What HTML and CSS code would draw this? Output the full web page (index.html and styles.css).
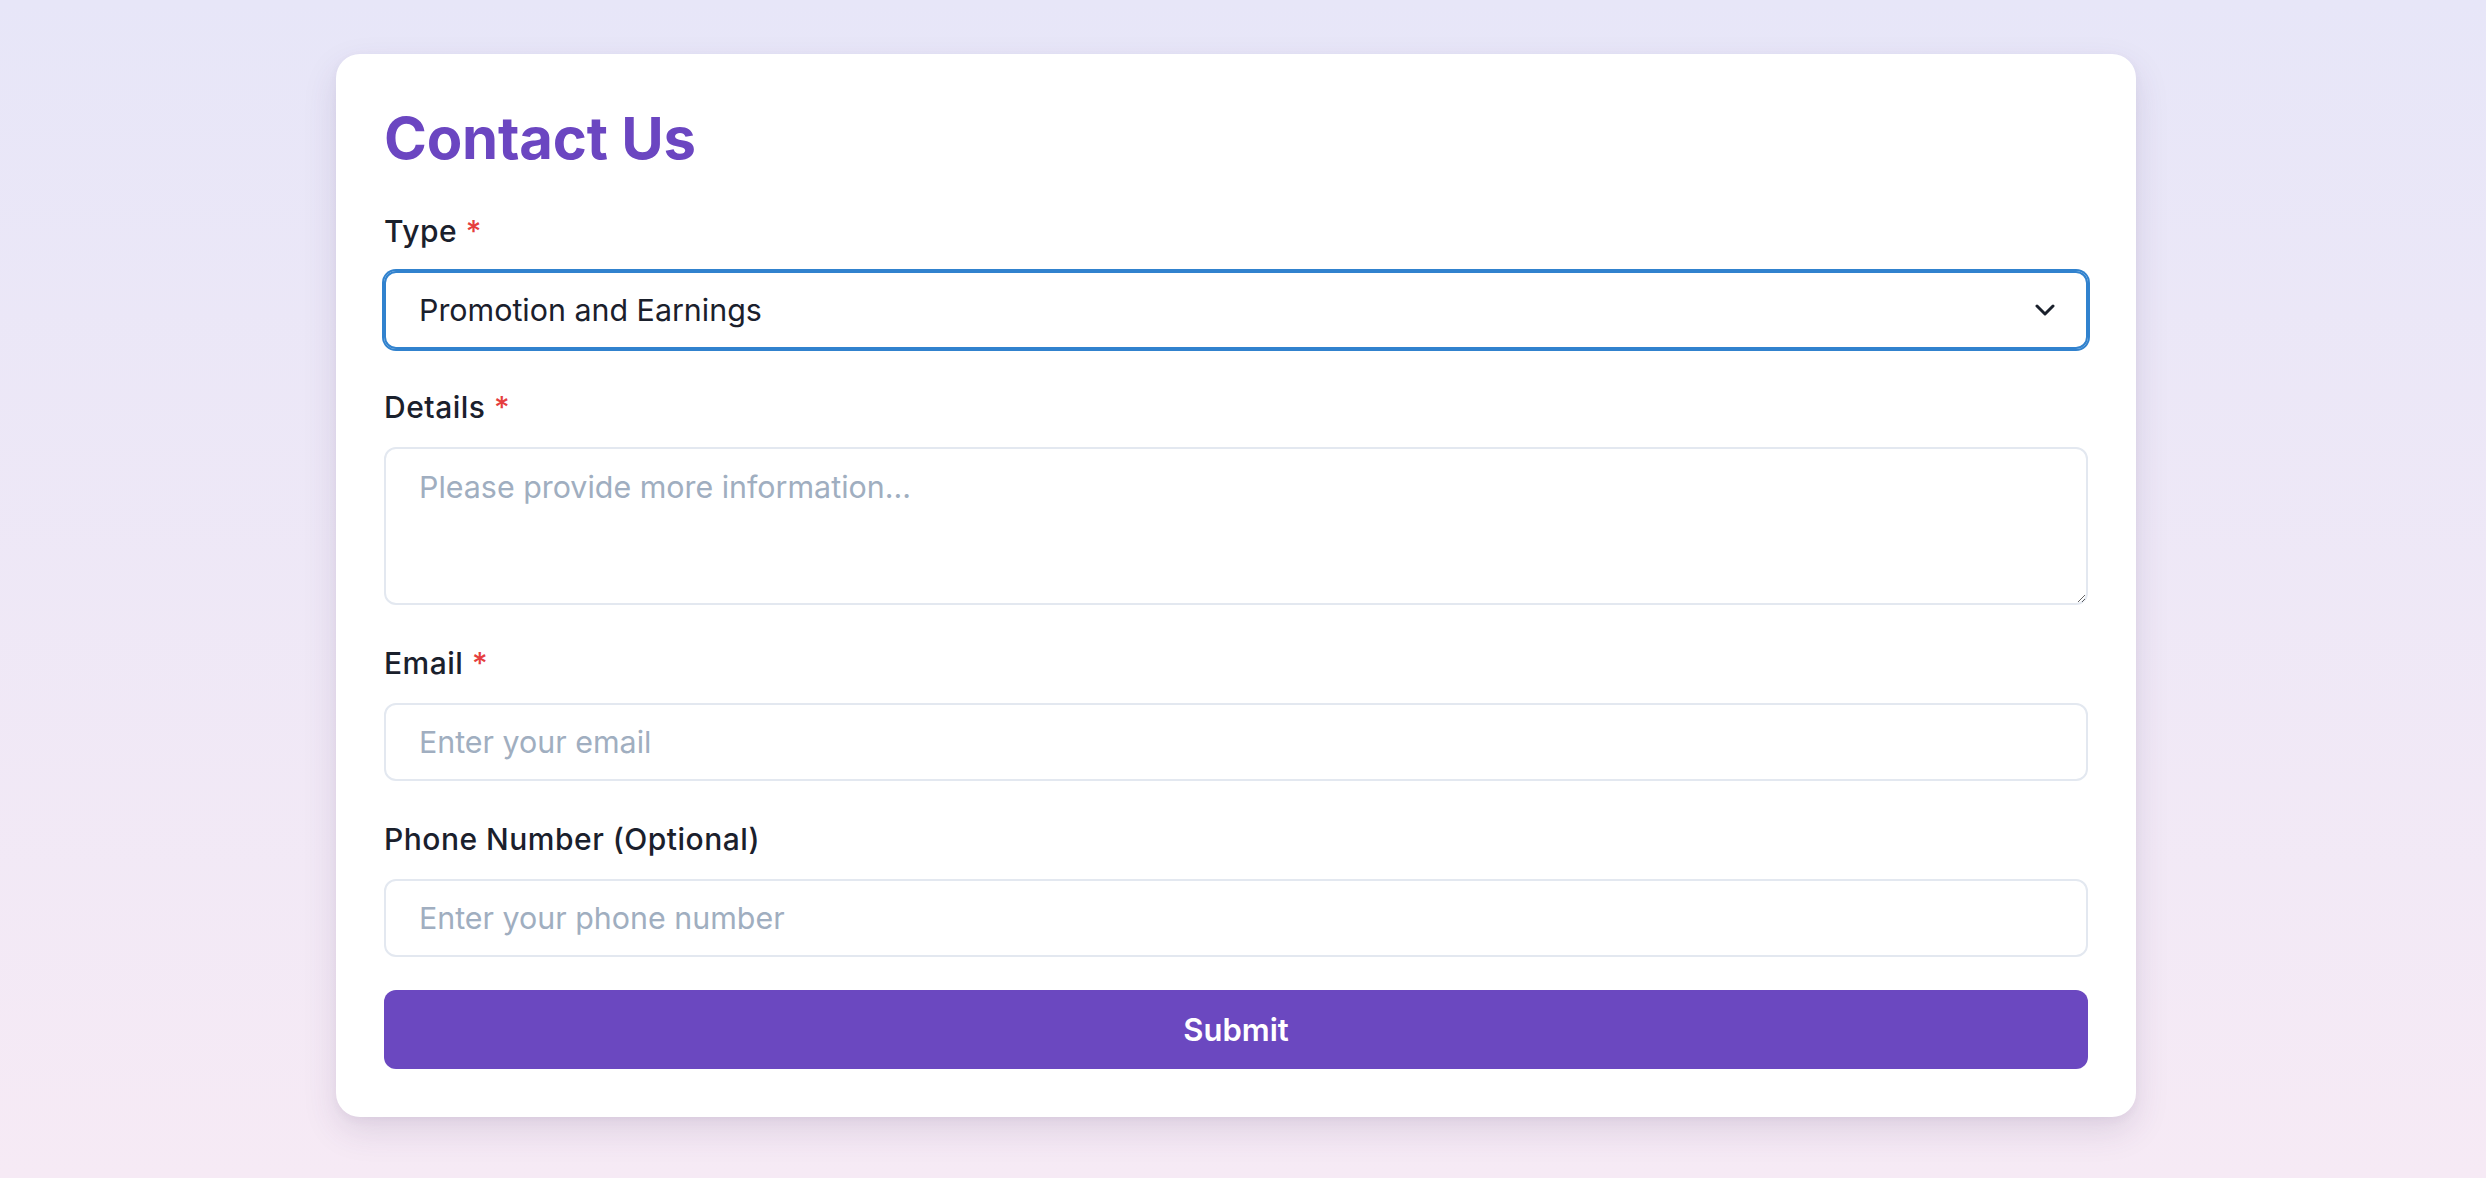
FILE: index.html
```html
<!DOCTYPE html>
<html lang="en">
<head>
<meta charset="utf-8">
<title>Contact Us</title>
<link rel="stylesheet" href="styles.css">
</head>
<body>
<main class="page">
  <form class="card">
    <h1 class="title">Contact Us</h1>
    <div class="fields">
      <div class="field">
        <label class="label">Type <span class="req">*</span></label>
        <div class="select-wrap">
          <div class="select">Promotion and Earnings</div>
          <svg class="chevron" viewBox="0 0 20 12" width="20" height="12"><path d="M2 2 L10 10 L18 2" fill="none" stroke="#1a202c" stroke-width="3" stroke-linecap="round" stroke-linejoin="round"/></svg>
        </div>
      </div>
      <div class="field">
        <label class="label">Details <span class="req">*</span></label>
        <textarea class="control textarea" placeholder="Please provide more information..."></textarea>
      </div>
      <div class="field">
        <label class="label">Email <span class="req">*</span></label>
        <input class="control input" type="email" placeholder="Enter your email">
      </div>
      <div class="field">
        <label class="label">Phone Number (Optional)</label>
        <input class="control input" type="tel" placeholder="Enter your phone number">
      </div>
    </div>
    <button class="submit" type="button">Submit</button>
  </form>
</main>
</body>
</html>
```
FILE: styles.css
```css
* { box-sizing: border-box; }
html, body { margin: 0; padding: 0; }
body {
  min-height: 100vh;
  background: linear-gradient(180deg, #e7e6f8 0%, #f6eaf5 100%);
  font-family: Inter, "Noto Sans", sans-serif;
  color: #1a202c;
}
.page {
  display: flex;
  justify-content: center;
  align-items: flex-start;
  padding: 54px 14px 0 0;
  min-height: 1178px;
}
.card {
  width: 1800px;
  background: #ffffff;
  border-radius: 24px;
  padding: 48px;
  box-shadow: 0 14px 34px rgba(70, 50, 100, 0.13), 0 3px 8px rgba(70, 50, 100, 0.05);
}
.title {
  margin: 0 0 35px;
  font-size: 58px;
  line-height: 72px;
  font-weight: 700;
  color: #6b46c1;
  letter-spacing: -0.2px;
}
.fields {
  display: flex;
  flex-direction: column;
  gap: 36px;
}
.field {
  display: flex;
  flex-direction: column;
}
.label {
  display: block;
  font-size: 30px;
  line-height: 45px;
  font-weight: 500;
  letter-spacing: 0.5px;
  color: #1a202c;
  margin-bottom: 17px;
}
.req {
  color: #e53e3e;
}
.select-wrap {
  position: relative;
}
.select {
  height: 78px;
  border: 2px solid #3182ce;
  box-shadow: 0 0 0 2px #3182ce;
  border-radius: 12px;
  padding: 0 33px;
  display: flex;
  align-items: center;
  font-size: 30.4px;
  color: #1a202c;
}
.chevron {
  position: absolute;
  right: 33px;
  top: 33px;
}
.control {
  width: 100%;
  border: 2px solid #e3e8f0;
  border-radius: 12px;
  font-family: Inter, "Noto Sans", sans-serif;
  font-size: 30.4px;
  color: #1a202c;
  background: #fff;
  outline: none;
}
.control::placeholder {
  color: #a0aec0;
}
.input {
  height: 78px;
  padding: 0 33px;
}
.textarea {
  height: 158px;
  padding: 15px 33px;
  line-height: 46px;
  resize: vertical;
  display: block;
}
.submit {
  margin-top: 33px;
  width: 100%;
  height: 79px;
  border: none;
  border-radius: 12px;
  background: #6b48c0;
  color: #ffffff;
  font-family: Inter, "Noto Sans", sans-serif;
  font-size: 31px;
  font-weight: 600;
  cursor: pointer;
}
```
